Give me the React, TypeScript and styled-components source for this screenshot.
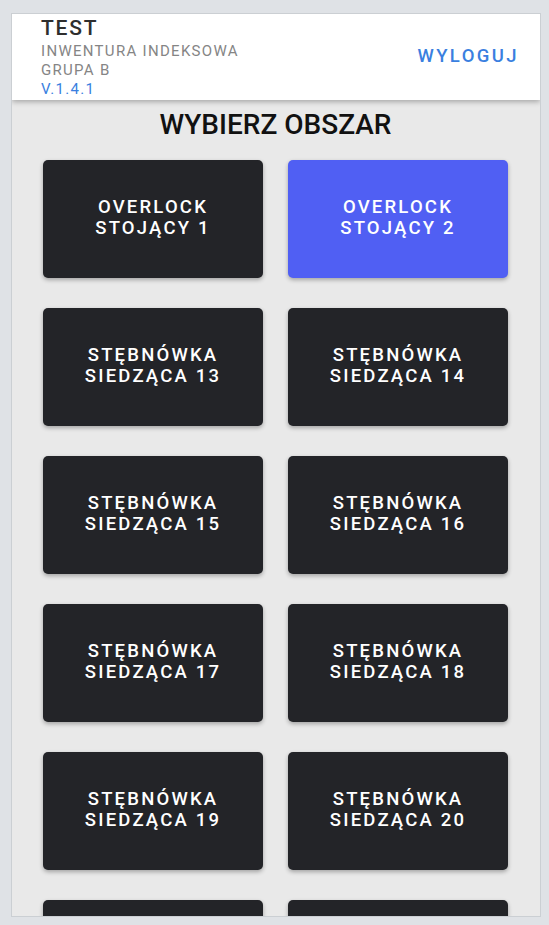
import React from "react";
import styled, { createGlobalStyle } from "styled-components";

const Global = createGlobalStyle`
  html, body {
    margin: 0;
    padding: 0;
    background: #dfe2e6;
    font-family: Roboto, "Noto Sans", Arial, sans-serif;
  }
  * { box-sizing: border-box; }
`;

const Page = styled.div`
  padding: 13px 8px 8px 11px;
  height: 925px;
  overflow: hidden;
`;

const Frame = styled.div`
  width: 530px;
  height: 904px;
  border: 1px solid #cbcfd3;
  background: #e9e9e9;
  overflow: hidden;
  display: flex;
  flex-direction: column;
`;

const Header = styled.header`
  position: relative;
  z-index: 1;
  background: #ffffff;
  height: 86px;
  padding: 0 21px 0 29px;
  display: flex;
  align-items: center;
  justify-content: space-between;
  box-shadow: 0 2px 5px rgba(0, 0, 0, 0.28);
  flex-shrink: 0;
`;

const Info = styled.div`
  display: flex;
  flex-direction: column;
  align-self: stretch;
`;

const AppName = styled.div`
  font-size: 21px;
  line-height: 28px;
  font-weight: 500;
  letter-spacing: 1.8px;
  color: #2e2e2e;
`;

const SubLine = styled.div<{ $blue?: boolean }>`
  font-size: 15px;
  line-height: 19px;
  font-weight: 400;
  letter-spacing: 1.3px;
  color: ${(p) => (p.$blue ? "#3a7fe0" : "#858585")};
`;

const Logout = styled.button`
  border: none;
  background: transparent;
  padding: 0;
  margin-top: -3px;
  font-family: Roboto, Arial, sans-serif;
  font-size: 18.5px;
  font-weight: 500;
  letter-spacing: 2.4px;
  color: #3a7fe0;
  cursor: pointer;
`;

const Content = styled.main`
  padding: 7px 32px 0 31px;
  display: flex;
  flex-direction: column;
`;

const Title = styled.h1`
  margin: 0 0 17px 0;
  text-align: center;
  font-size: 28px;
  line-height: 36px;
  font-weight: 500;
  color: #111111;
`;

const Grid = styled.div`
  display: grid;
  grid-template-columns: 220px 220px;
  column-gap: 25px;
  row-gap: 30.5px;
`;

const Tile = styled.button<{ $active?: boolean }>`
  height: 117.5px;
  border: none;
  border-radius: 5px;
  background: ${(p) => (p.$active ? "#505ff3" : "#232428")};
  box-shadow: 0 2px 4px rgba(0, 0, 0, 0.3);
  color: #ffffff;
  font-family: Roboto, Arial, sans-serif;
  font-size: 18.5px;
  font-weight: 500;
  line-height: 21px;
  letter-spacing: 2.2px;
  display: flex;
  flex-direction: column;
  align-items: center;
  justify-content: center;
  padding: 0 0 2px 0;
  cursor: pointer;
`;

const areas = [
  ["OVERLOCK", "STOJĄCY 1"],
  ["OVERLOCK", "STOJĄCY 2"],
  ["STĘBNÓWKA", "SIEDZĄCA 13"],
  ["STĘBNÓWKA", "SIEDZĄCA 14"],
  ["STĘBNÓWKA", "SIEDZĄCA 15"],
  ["STĘBNÓWKA", "SIEDZĄCA 16"],
  ["STĘBNÓWKA", "SIEDZĄCA 17"],
  ["STĘBNÓWKA", "SIEDZĄCA 18"],
  ["STĘBNÓWKA", "SIEDZĄCA 19"],
  ["STĘBNÓWKA", "SIEDZĄCA 20"],
  ["STĘBNÓWKA", "SIEDZĄCA 21"],
  ["STĘBNÓWKA", "SIEDZĄCA 22"],
];

export default function App() {
  return (
    <>
      <Global />
      <Page>
        <Frame>
          <Header>
            <Info>
              <AppName>TEST</AppName>
              <SubLine>INWENTURA INDEKSOWA</SubLine>
              <SubLine>GRUPA B</SubLine>
              <SubLine $blue>V.1.4.1</SubLine>
            </Info>
            <Logout>WYLOGUJ</Logout>
          </Header>
          <Content>
            <Title>WYBIERZ OBSZAR</Title>
            <Grid>
              {areas.map(([a, b], i) => (
                <Tile key={i} $active={i === 1}>
                  <span>{a}</span>
                  <span>{b}</span>
                </Tile>
              ))}
            </Grid>
          </Content>
        </Frame>
      </Page>
    </>
  );
}
